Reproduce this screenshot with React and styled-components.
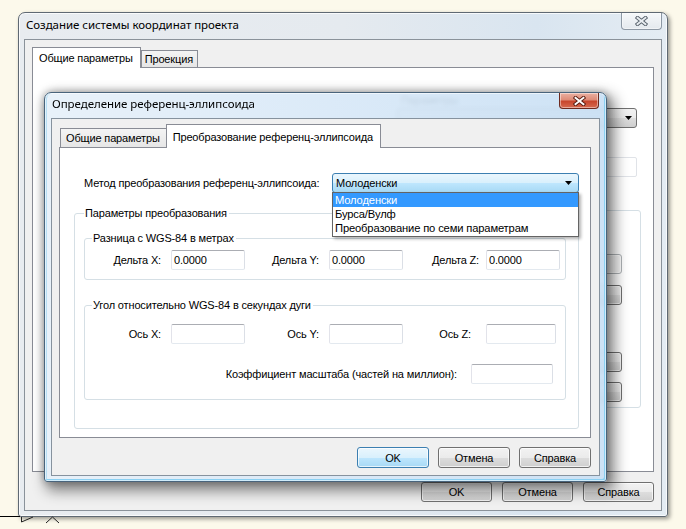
import React from 'react'
import styled, { createGlobalStyle } from 'styled-components'

const GlobalStyle = createGlobalStyle`
  html, body { margin: 0; padding: 0; }
  body {
    background: #fcf9eb;
    font-family: "Liberation Sans", Arial, sans-serif;
    font-size: 11px;
    letter-spacing: -0.15px;
    color: #000;
  }
  * { box-sizing: border-box; }
`

const Desktop = styled.div`
  position: relative;
  width: 686px;
  height: 529px;
  padding: 12px 0 0 18px;
  overflow: hidden;
`

const AxisMark = styled.svg`
  position: absolute;
  left: 0;
  top: 510px;
`

const OuterWindow = styled.div`
  width: 650px;
  height: 505px;
  display: flex;
  flex-direction: column;
  padding: 0 5px 5px;
  border: 1px solid #5f6973;
  border-radius: 7px 7px 3px 3px;
  background: linear-gradient(90deg, #e8ecf0 0%, #e5eaef 50%, #d9e5f0 80%, #e4ecf3 100%);
  box-shadow: inset 0 0 0 1px rgba(255, 255, 255, 0.75), 2px 2px 4px rgba(0, 0, 0, 0.4);
`

const DialogWindow = styled.div`
  position: absolute;
  left: 44px;
  top: 92px;
  width: 563px;
  display: flex;
  flex-direction: column;
  padding: 0 6px 5px;
  border: 1px solid #49647c;
  border-radius: 7px 7px 3px 3px;
  background: linear-gradient(90deg, rgba(230, 240, 249, 0.9) 0%, rgba(214, 231, 247, 0.9) 55%, rgba(200, 223, 244, 0.9) 100%);
  backdrop-filter: blur(2px);
  box-shadow: inset 0 0 0 1px rgba(255, 255, 255, 0.6), inset -2px -2px 0 #8bd0f2, inset 2px 0 0 rgba(150, 210, 240, 0.6),
    0 0 8px rgba(0, 0, 0, 0.3), 5px 6px 14px 3px rgba(0, 0, 0, 0.45);
`

const TitleBar = styled.div`
  display: flex;
  align-items: flex-start;
  flex-shrink: 0;
  height: ${p => p.$h}px;
`

const Title = styled.div`
  font-family: "Noto Sans", sans-serif;
  font-size: 11.5px;
  letter-spacing: -0.05px;
  line-height: 16px;
  white-space: nowrap;
  padding: ${p => p.$pt}px 0 0 ${p => p.$pl}px;
`

const CloseButton = styled.div`
  margin-left: auto;
  margin-right: ${p => p.$mr || 0}px;
  width: ${p => p.$w}px;
  height: ${p => p.$h}px;
  display: flex;
  align-items: center;
  justify-content: center;
  border: 1px solid ${p => (p.$active ? '#6d2a1f' : '#8d98a4')};
  border-top: none;
  border-radius: 0 0 4px 4px;
  background: ${p =>
    p.$active
      ? 'linear-gradient(#eab0a2 0%, #de8c78 45%, #c8462d 55%, #d66a50 100%)'
      : 'linear-gradient(#f6f8fa, #e4e9ee)'};
  box-shadow: inset 0 0 0 1px rgba(255, 255, 255, 0.45);
`

const Client = styled.div`
  display: flex;
  flex-direction: column;
  background: #f0f0f0;
  border: 1px solid ${p => p.$edge};
  padding: ${p => p.$pad};
`

const TabStrip = styled.div`
  display: flex;
  align-items: flex-end;
  height: ${p => p.$h}px;
  padding-left: ${p => p.$pl || 0}px;
`

const Tab = styled.div`
  position: relative;
  z-index: ${p => (p.$active ? 2 : 1)};
  height: ${p => p.$h}px;
  display: flex;
  align-items: center;
  padding: 0 ${p => p.$px}px 0 ${p => p.$px - 1}px;
  margin-left: ${p => p.$ml || 0}px;
  margin-bottom: ${p => (p.$active ? -1 : 0)}px;
  border: 1px solid #898c95;
  border-bottom: none;
  background: ${p => (p.$active ? '#fff' : 'linear-gradient(#f4f4f4, #e6e6e6)')};
  white-space: nowrap;
`

const TabPanel = styled.div`
  position: relative;
  height: ${p => p.$h}px;
  background: #fff;
  border: 1px solid #898c95;
  padding: ${p => p.$pad};
  display: flex;
  flex-direction: column;
`

const ButtonRow = styled.div`
  display: flex;
  justify-content: flex-end;
  gap: ${p => p.$gap}px;
  margin-top: ${p => p.$mt}px;
`

const Button = styled.div`
  width: ${p => p.$w}px;
  height: ${p => p.$h}px;
  margin-top: ${p => p.$mt || 0}px;
  display: flex;
  align-items: center;
  justify-content: center;
  border: 1px solid ${p => (p.$default ? '#3c7fb1' : '#707070')};
  border-radius: 3px;
  background: ${p =>
    p.$default
      ? 'linear-gradient(#eaf6fd 0%, #d9f0fc 50%, #bee6fd 51%, #a7d9f5 100%)'
      : 'linear-gradient(#f2f2f2 0%, #ebebeb 50%, #dddddd 51%, #cfcfcf 100%)'};
  box-shadow: inset 0 0 0 1px rgba(255, 255, 255, 0.7);
  ${p => p.$disabled && 'border-color: #adb2b5; background: #f4f4f4; color: #838383;'}
`

/* outer dialog content, mostly hidden behind the inner one */
const GhostColumn = styled.div`
  width: 240px;
  margin-left: auto;
  display: flex;
  flex-direction: column;
`

const GhostLabel = styled.div`
  line-height: 14px;
  height: 14px;
  padding-left: 4px;
  color: #222;
`

const GhostCombo = styled.div`
  margin-top: 1px;
  height: 20px;
  border: 1px solid #707070;
  border-radius: 3px;
  background: linear-gradient(#f2f2f2 0%, #ebebeb 50%, #dddddd 51%, #cfcfcf 100%);
  display: flex;
  align-items: center;
  justify-content: flex-end;
  padding-right: 4px;
`

const GhostInput = styled.div`
  margin-top: ${p => p.$mt}px;
  height: 20px;
  border: 1px solid #e0e3e8;
  border-radius: 2px;
  background: #fff;
`

const GhostGroup = styled.div`
  margin-top: 33px;
  margin-right: -4px;
  height: 198px;
  border: 1px solid #d5dfe5;
  border-radius: 3px;
  padding: 43px 18px 0 0;
  display: flex;
  flex-direction: column;
  align-items: flex-end;
`

/* inner dialog content */
const MethodRow = styled.div`
  display: flex;
  align-items: center;
  height: 20px;
`

const RowLabel = styled.span`
  margin-left: ${p => p.$ml || 0}px;
  margin-right: ${p => p.$mr || 0}px;
  white-space: nowrap;
`

const ComboBox = styled.div`
  position: relative;
  width: 247px;
  height: 20px;
  margin-left: auto;
  border: 1px solid #3c7fb1;
  border-radius: 3px;
  background: linear-gradient(#eaf6fd 0%, #d9f0fc 48%, #bee6fd 52%, #a7d9f5 100%);
  display: flex;
  align-items: center;
  padding: 0 6px 0 3px;
  justify-content: space-between;
`

const DropList = styled.div`
  position: absolute;
  left: -1px;
  top: 100%;
  width: calc(100% + 2px);
  background: #fff;
  border: 1px solid #646464;
  padding-bottom: 1px;
  box-shadow: 2px 2px 3px rgba(0, 0, 0, 0.3);
  z-index: 5;
`

const DropItem = styled.div`
  height: 14px;
  line-height: 14px;
  padding-left: 2px;
  white-space: nowrap;
  font-size: 11.2px;
  background: ${p => (p.$selected ? '#3399ff' : 'transparent')};
  color: ${p => (p.$selected ? '#fff' : '#000')};
`

const Group = styled.fieldset`
  margin: ${p => p.$m || '0'};
  padding: ${p => p.$pad};
  border: 1px solid #d5dfe5;
  border-radius: 3px;
  min-width: 0;
`

const Legend = styled.legend`
  margin-left: ${p => p.$ml || 0}px;
  padding: 0 2px 0 1px;
  line-height: 14px;
  white-space: nowrap;
`

const FieldGrid = styled.div`
  display: grid;
  grid-template-columns: 86px 74px 84px 74px 83px ${p => p.$last}px;
  align-items: center;
`

const FieldLabel = styled.span`
  text-align: right;
  padding-right: ${p => p.$pr ?? 10}px;
  white-space: nowrap;
`

const TextBox = styled.div`
  width: ${p => p.$w || 74}px;
  height: 20px;
  border: 1px solid;
  border-color: #abadb3 #dbdfe6 #e3e9ef #e2e3ea;
  border-radius: 2px;
  background: #fff;
  padding-left: 2px;
  line-height: 18px;
`

const ScaleRow = styled.div`
  display: flex;
  justify-content: flex-end;
  align-items: center;
  margin-top: 20px;
  padding-right: 12px;
`

const CloseGlyph = ({ fill, edge }) => (
  <svg width="13" height="10" viewBox="0 0 13 10">
    <path d="M2.5 1.8 L10.5 8.2 M10.5 1.8 L2.5 8.2" stroke={edge} strokeWidth="3.8" strokeLinecap="square" fill="none" />
    <path d="M2.5 1.8 L10.5 8.2 M10.5 1.8 L2.5 8.2" stroke={fill} strokeWidth="1.9" strokeLinecap="square" fill="none" />
  </svg>
)

const Arrow = () => (
  <svg width="7" height="4" viewBox="0 0 7 4">
    <path d="M0 0 H7 L3.5 4 Z" fill="#000" />
  </svg>
)

const pairs1 = [
  { label: 'Дельта X:', value: '0.0000' },
  { label: 'Дельта Y:', value: '0.0000' },
  { label: 'Дельта Z:', value: '0.0000', pr: 7 },
]

const pairs2 = [
  { label: 'Ось X:' },
  { label: 'Ось Y:' },
  { label: 'Ось Z:', pr: 15, w: 70 },
]

const methods = ['Молоденски', 'Бурса/Вулф', 'Преобразование по семи параметрам']

export default function App() {
  return (
    <Desktop>
      <GlobalStyle />
      <AxisMark width="70" height="19" viewBox="0 0 70 19">
        <path d="M0 6.5 H20" stroke="#000" strokeWidth="1" />
        <path d="M21.5 7 V12 L33 7" stroke="#222" strokeWidth="1" fill="none" />
        <path d="M46 13 L52.5 7 L59 13" stroke="#222" strokeWidth="1" fill="none" />
      </AxisMark>

      <OuterWindow>
        <TitleBar $h={26}>
          <Title $pt={4} $pl={2}>Создание системы координат проекта</Title>
          <CloseButton $w={41} $h={17}>
            <CloseGlyph fill="#e9edf1" edge="#59636d" />
          </CloseButton>
        </TitleBar>
        <Client $edge="#8a929a" $pad="7px 7px 8px 7px">
          <TabStrip $h={20}>
            <Tab $active $h={21} $px={7}>Общие параметры</Tab>
            <Tab $h={17} $px={4}>Проекция</Tab>
          </TabStrip>
          <TabPanel $h={405} $pad="25px 16px 0 0">
            <GhostColumn>
              <GhostLabel>Параметры</GhostLabel>
              <GhostCombo>
                <Arrow />
              </GhostCombo>
              <GhostInput $mt={29} />
              <GhostGroup>
                <Button $w={80} $h={20} $disabled />
                <Button $w={80} $h={20} $mt={11} />
                <Button $w={80} $h={20} $mt={47} />
                <Button $w={80} $h={20} $mt={10} />
              </GhostGroup>
            </GhostColumn>
          </TabPanel>
          <ButtonRow $gap={10} $mt={10}>
            <Button $w={71} $h={20}>OK</Button>
            <Button $w={71} $h={20}>Отмена</Button>
            <Button $w={71} $h={20}>Справка</Button>
          </ButtonRow>
        </Client>
      </OuterWindow>

      <DialogWindow>
        <TitleBar $h={25}>
          <Title $pt={3} $pl={1}>Определение референц-эллипсоида</Title>
          <CloseButton $active $w={40} $h={16} $mr={1}>
            <CloseGlyph fill="#ffffff" edge="#5a1d12" />
          </CloseButton>
        </TitleBar>
        <Client $edge="#86929e" $pad="5px 8px 7px 7px">
          <TabStrip $h={23} $pl={1}>
            <Tab $h={19} $px={6}>Общие параметры</Tab>
            <Tab $active $h={24} $px={7} $ml={-1}>Преобразование референц-эллипсоида</Tab>
          </TabStrip>
          <TabPanel $h={291} $pad="25px 11px 0 14px">
            <MethodRow>
              <RowLabel $ml={10}>Метод преобразования референц-эллипсоида:</RowLabel>
              <ComboBox>
                <span>Молоденски</span>
                <Arrow />
                <DropList>
                  {methods.map((m, i) => (
                    <DropItem key={m} $selected={i === 0}>{m}</DropItem>
                  ))}
                </DropList>
              </ComboBox>
            </MethodRow>

            <Group $m="13px 0 0 0" $pad="11px 12px 28px 9px">
              <Legend>Параметры преобразования</Legend>

              <Group $pad="5px 0 9px 0">
                <Legend $ml={7}>Разница с WGS-84 в метрах</Legend>
                <FieldGrid $last={74}>
                  {pairs1.map(p => (
                    <React.Fragment key={p.label}>
                      <FieldLabel $pr={p.pr}>{p.label}</FieldLabel>
                      <TextBox>{p.value}</TextBox>
                    </React.Fragment>
                  ))}
                </FieldGrid>
              </Group>

              <Group $m="18px 0 0 0" $pad="12px 0 15px 0">
                <Legend $ml={7}>Угол относительно WGS-84 в секундах дуги</Legend>
                <FieldGrid $last={70}>
                  {pairs2.map(p => (
                    <React.Fragment key={p.label}>
                      <FieldLabel $pr={p.pr}>{p.label}</FieldLabel>
                      <TextBox $w={p.w} />
                    </React.Fragment>
                  ))}
                </FieldGrid>
                <ScaleRow>
                  <RowLabel $mr={14}>Коэффициент масштаба (частей на миллион):</RowLabel>
                  <TextBox $w={82} />
                </ScaleRow>
              </Group>
            </Group>
          </TabPanel>
          <ButtonRow $gap={9} $mt={9}>
            <Button $default $w={72} $h={21}>OK</Button>
            <Button $w={72} $h={21}>Отмена</Button>
            <Button $w={72} $h={21}>Справка</Button>
          </ButtonRow>
        </Client>
      </DialogWindow>
    </Desktop>
  )
}
